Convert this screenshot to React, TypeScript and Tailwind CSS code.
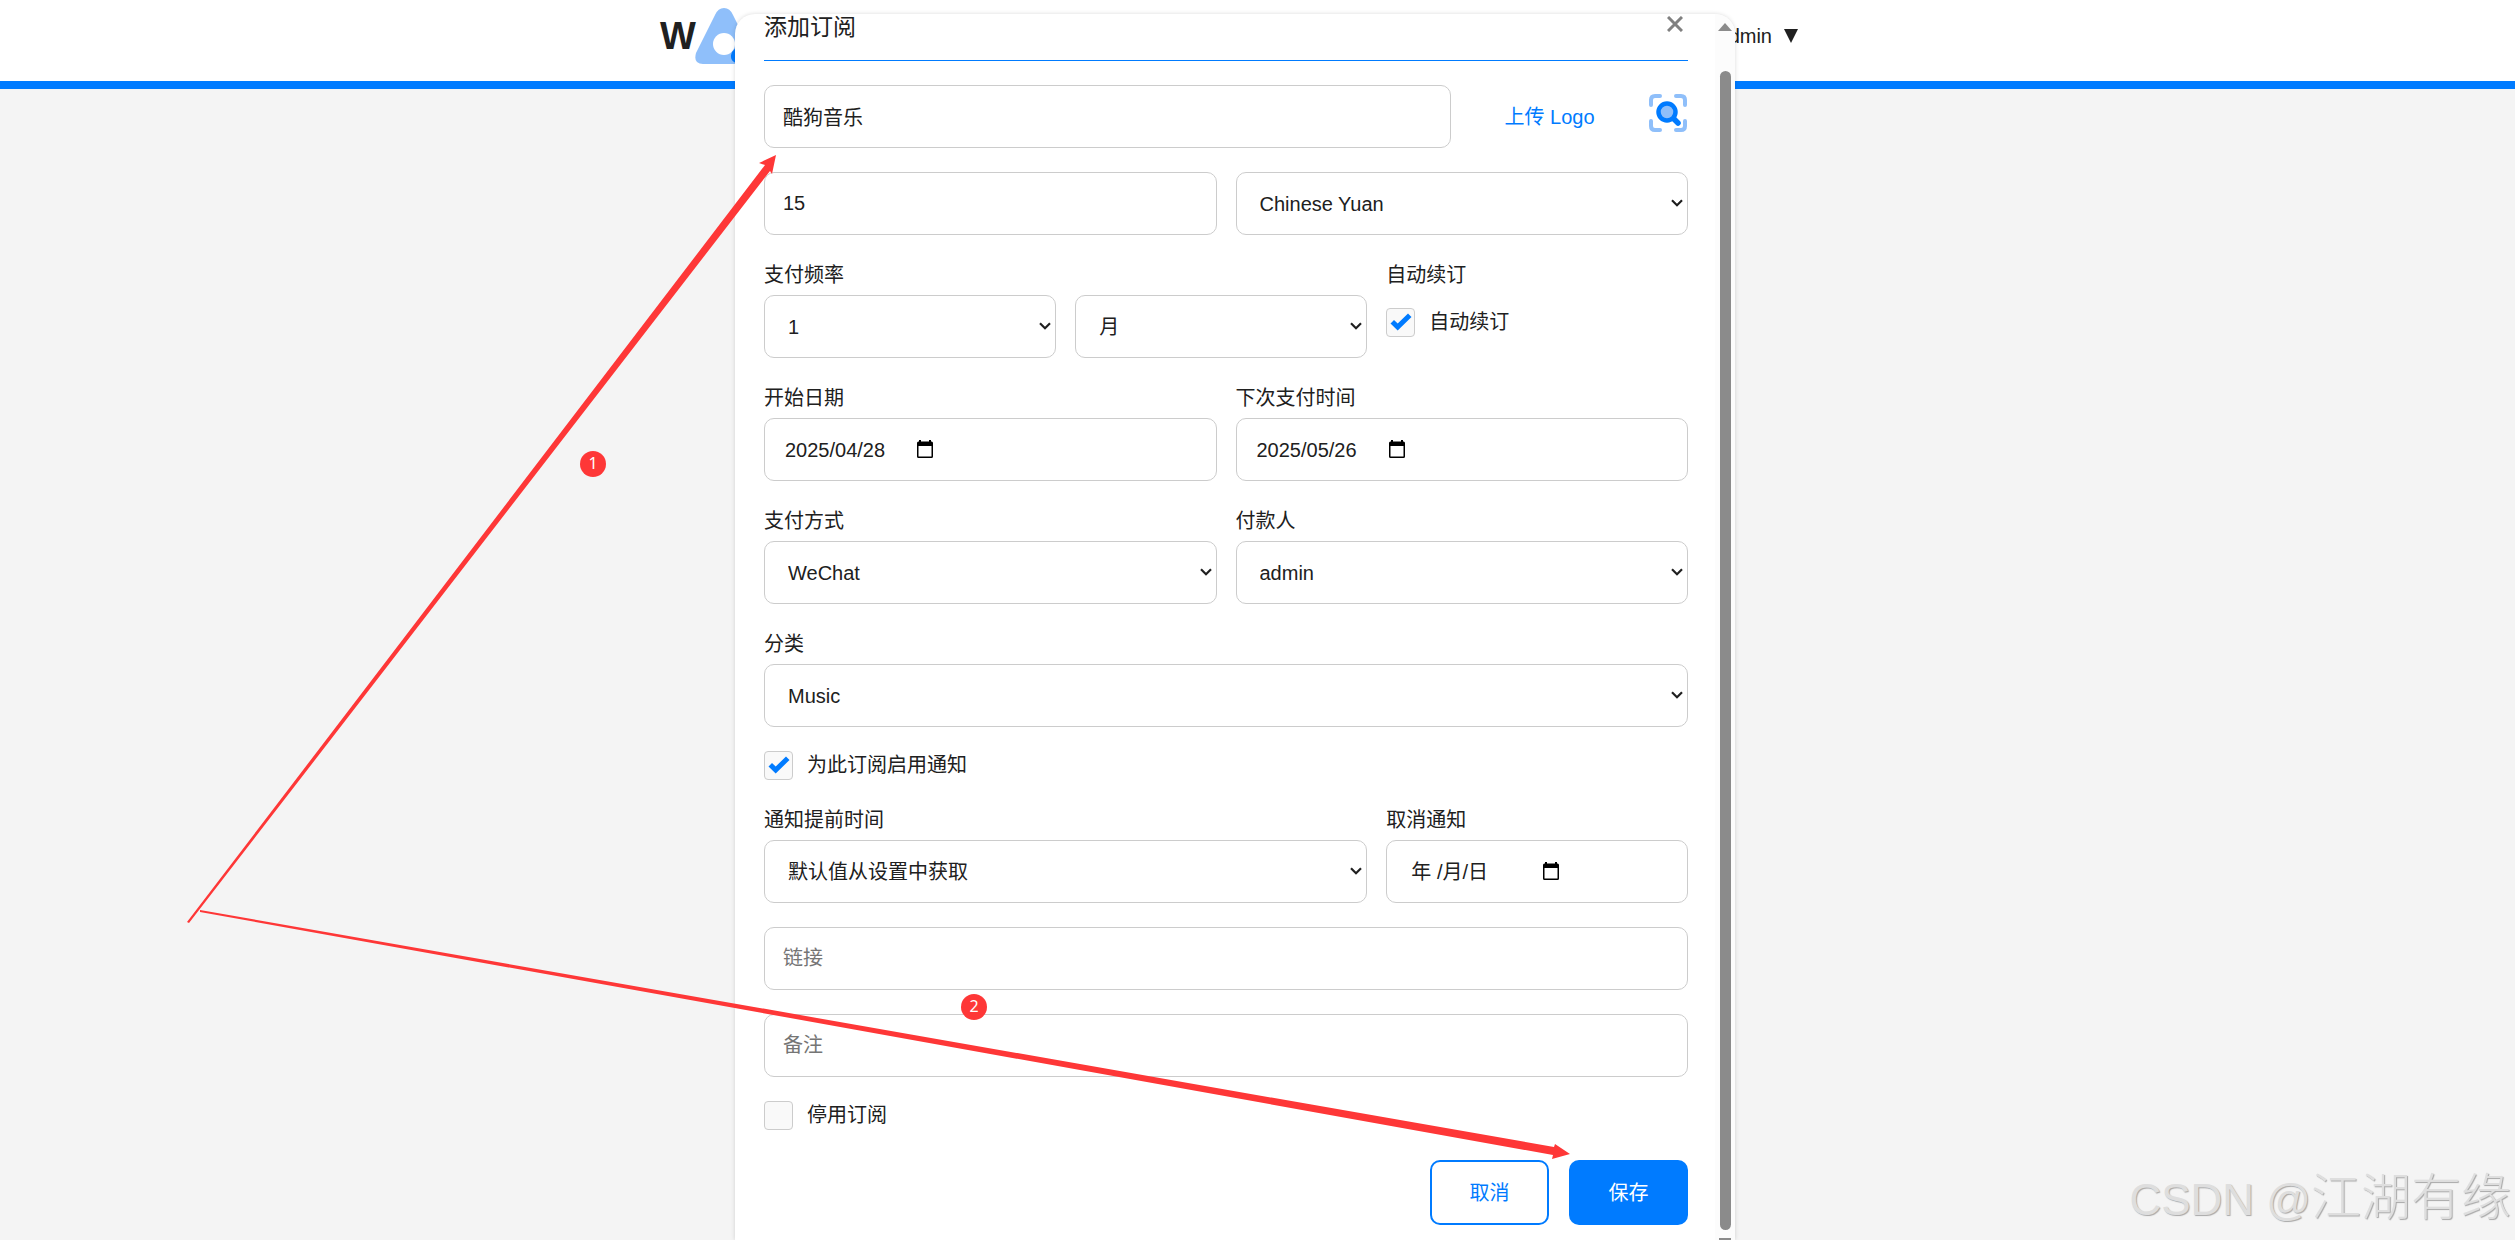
import React, { useState } from "react";

const FIELD =
  "h-[63px] w-full rounded-[10px] border border-[#cccccc] bg-white text-[20px] text-[#202020] outline-none";

const Chevron: React.FC = () => (
  <svg
    className="pointer-events-none absolute top-[27px] right-[5px] h-2 w-3"
    viewBox="0 0 12 8"
    fill="none"
    stroke="#202020"
    strokeWidth="2.2"
  >
    <path d="M1 1.2 L6 6.2 L11 1.2" />
  </svg>
);

interface FieldProps {
  id: string;
  label: string;
  children: React.ReactNode;
}

const Field: React.FC<FieldProps> = ({ id, label, children }) => (
  <div className="min-w-0">
    <label htmlFor={id} className="mb-[3px] block text-[20px] leading-[33px]">
      {label}
    </label>
    {children}
  </div>
);

interface SelectProps {
  id: string;
  options: string[];
  ariaLabel?: string;
}

const Select: React.FC<SelectProps> = ({ id, options, ariaLabel }) => (
  <div className="relative min-w-0 flex-1">
    <select id={id} aria-label={ariaLabel} className={FIELD + " appearance-none pr-6 pl-[23px]"}>
      {options.map((option) => (
        <option key={option}>{option}</option>
      ))}
    </select>
    <Chevron />
  </div>
);

interface DateFieldProps {
  id: string;
  value?: string;
  placeholder?: string;
  className: string;
}

const DateField: React.FC<DateFieldProps> = ({ id, value, placeholder, className }) => (
  <div className={FIELD + " flex items-center " + className}>
    <input
      id={id}
      type="text"
      defaultValue={value}
      placeholder={placeholder}
      className="w-[132px] bg-transparent outline-none placeholder:text-[#202020]"
    />
    <button type="button" aria-label="选择日期" className="shrink-0 pb-[2px]">
      <svg width="16" height="18" viewBox="0 0 16 18">
        <path
          fillRule="evenodd"
          d="M2 0h2v1.5h8V0h2v1.5h.5A1.5 1.5 0 0 1 16 3v13.5a1.5 1.5 0 0 1-1.5 1.5h-13A1.5 1.5 0 0 1 0 16.5V3a1.5 1.5 0 0 1 1.5-1.5H2zM1.5 6v10.5h13V6z"
        />
      </svg>
    </button>
  </div>
);

interface CheckProps {
  id: string;
  label: string;
  defaultChecked?: boolean;
}

const Check: React.FC<CheckProps> = ({ id, label, defaultChecked = false }) => {
  const [checked, setChecked] = useState(defaultChecked);

  return (
    <div className="flex h-[29px] items-center gap-[14px]">
      <div className="relative h-[29px] w-[29px]">
        <input
          id={id}
          type="checkbox"
          checked={checked}
          onChange={() => setChecked((prev) => !prev)}
          className="block h-[29px] w-[29px] appearance-none rounded-[4px] border border-[#cccccc] bg-[#f9f9f9]"
        />
        {checked && (
          <svg className="pointer-events-none absolute inset-0" width="29" height="29" viewBox="0 0 29 29">
            <path d="M4.500 15.500 L8 12 L11.700 15.500 L22 5.500 L25.500 9 L11.700 22.500 Z" fill="#007bff" />
          </svg>
        )}
      </div>
      <label htmlFor={id} className="text-[20px] leading-[29px]">
        {label}
      </label>
    </div>
  );
};

const Header: React.FC = () => (
  <header className="border-b-8 border-[#007bff] bg-white pr-[45px]">
    <div className="mx-auto flex h-[81px] w-full max-w-[1150px] items-start justify-between pt-2">
      <div className="flex">
        <span className="w-[35px] text-[38px] leading-[56px] font-bold">W</span>
        <svg width="90" height="57" viewBox="0 0 90 57">
          <path
            d="M20 7 Q23 0 29 0 Q35 0 38 7 L57 45 Q61 56 51 56 L8 56 Q-2 56 1 45 Z"
            fill="#8fbffa"
          />
          <circle cx="29" cy="36" r="11" fill="#ffffff" />
          <path d="M58 20 Q62 14 66 20 L82 46 Q86 56 77 56 L44 56 Q33 54 37 44 Z" fill="#007bff" />
        </svg>
      </div>
      <button type="button" className="flex items-center gap-3 pr-3 text-[20px] leading-[56px]">
        admin
        <svg width="14" height="14" viewBox="0 0 14 14">
          <path d="M0 0 H14 L7 14 Z" fill="#202020" />
        </svg>
      </button>
    </div>
  </header>
);

const ScrollBar: React.FC = () => (
  <div className="flex w-5 shrink-0 flex-col items-center bg-[#fcfcfc] pt-[9px]">
    <svg width="14" height="8" viewBox="0 0 14 8" className="shrink-0">
      <path d="M7 0 L14 8 H0 Z" fill="#8b8b8b" />
    </svg>
    <div className="mt-10 w-[11px] flex-1 rounded-full bg-[#8b8b8b]" />
    <div className="mt-2 h-[2px] w-3 bg-[#8b8b8b]" />
  </div>
);

const SubscriptionForm: React.FC = () => (
  <form className="min-w-0 flex-1 pr-[27px] pl-[29px]">
    <div className="flex h-[47px] items-start justify-between border-b border-[#007bff]">
      <h3 className="text-[23px] leading-[26px]">添加订阅</h3>
      <button type="button" aria-label="关闭" className="pt-[2px] pr-[5px]">
        <svg width="16" height="16" viewBox="0 0 16 16" stroke="#808080" strokeWidth="3">
          <path d="M1 1 L15 15 M15 1 L1 15" />
        </svg>
      </button>
    </div>

    <div className="mt-6 flex flex-col gap-6">
      {/* Name and logo */}
      <div className="flex gap-5">
        <input
          type="text"
          aria-label="订阅名称"
          defaultValue="酷狗音乐"
          className={FIELD + " min-w-0 flex-1 px-[18px]"}
        />
        <button type="button" className="w-[157px] text-[20px] text-[#007bff]">
          上传 Logo
        </button>
        <button type="button" aria-label="搜索 Logo" className="pb-2">
          <svg width="40" height="40" viewBox="0 0 40 40" fill="none" strokeLinecap="round">
            <path
              d="M3 12 V7 Q3 3 7 3 H12 M28 3 H33 Q37 3 37 7 V12 M37 28 V33 Q37 37 33 37 H28 M12 37 H7 Q3 37 3 33 V28"
              stroke="#8fbffa"
              strokeWidth="4"
            />
            <path d="M25 25 L30 30" stroke="#007bff" strokeWidth="5.500" />
            <circle cx="19" cy="19" r="8.500" fill="#8fbffa" stroke="#007bff" strokeWidth="4.500" />
          </svg>
        </button>
      </div>

      {/* Price */}
      <div className="grid grid-cols-2 gap-[19px]">
        <input type="text" aria-label="价格" defaultValue="15" className={FIELD + " px-[18px]"} />
        <Select id="currency" ariaLabel="货币" options={["Chinese Yuan", "US Dollar", "Euro"]} />
      </div>

      <div className="grid grid-cols-[2fr_1fr] gap-[19px]">
        <Field id="frequency" label="支付频率">
          <div className="flex gap-[19px]">
            <Select id="frequency" options={["1", "2", "3"]} />
            <Select id="cycle" ariaLabel="周期" options={["月", "日", "周", "年"]} />
          </div>
        </Field>
        <div>
          <p className="mb-4 text-[20px] leading-[33px]">自动续订</p>
          <Check id="auto-renew" label="自动续订" defaultChecked />
        </div>
      </div>

      <div className="grid grid-cols-2 gap-[19px]">
        <Field id="start-date" label="开始日期">
          <DateField id="start-date" value="2025/04/28" className="pl-5" />
        </Field>
        <Field id="next-payment" label="下次支付时间">
          <DateField id="next-payment" value="2025/05/26" className="pl-5" />
        </Field>
      </div>

      <div className="grid grid-cols-2 gap-[19px]">
        <Field id="method" label="支付方式">
          <Select id="method" options={["WeChat", "Alipay", "PayPal"]} />
        </Field>
        <Field id="payer" label="付款人">
          <Select id="payer" options={["admin"]} />
        </Field>
      </div>

      <Field id="category" label="分类">
        <Select id="category" options={["Music", "Entertainment", "Utilities"]} />
      </Field>

      {/* Notifications */}
      <Check id="notify" label="为此订阅启用通知" defaultChecked />

      <div className="grid grid-cols-[2fr_1fr] gap-[19px]">
        <Field id="notify-days" label="通知提前时间">
          <Select id="notify-days" options={["默认值从设置中获取", "1", "2"]} />
        </Field>
        <Field id="cancel-date" label="取消通知">
          <DateField id="cancel-date" placeholder="年 /月/日" className="pl-6" />
        </Field>
      </div>

      <input
        type="text"
        aria-label="链接"
        placeholder="链接"
        className={FIELD + " px-[18px] placeholder:text-[#757575]"}
      />
      <input
        type="text"
        aria-label="备注"
        placeholder="备注"
        className={FIELD + " px-[18px] placeholder:text-[#757575]"}
      />
      <Check id="inactive" label="停用订阅" />
    </div>

    <div className="mt-[30px] flex justify-end gap-5 text-[20px]">
      <button
        type="button"
        className="h-[65px] w-[119px] rounded-[10px] border-2 border-[#007bff] bg-white text-[#007bff]"
      >
        取消
      </button>
      <button type="button" className="h-[65px] w-[119px] rounded-[10px] bg-[#007bff] text-white">
        保存
      </button>
    </div>
  </form>
);

const Annotations: React.FC = () => (
  <div className="pointer-events-none absolute inset-0 overflow-hidden">
    <svg className="absolute top-0 left-0" width="1600" height="1200" fill="#fe3737">
      <polygon points="187,922 765,165 759,163 776,155 772,174 770,171 189,923" />
      <polygon points="200,910 1554,1147 1555,1144 1570,1154 1552,1159 1553,1155 200,912" />
    </svg>
    <span className="absolute top-[451px] left-[580px] h-[26px] w-[26px] rounded-full bg-[#fe3737] text-center font-['Noto_Sans',sans-serif] text-base leading-[25px] text-white">
      1
    </span>
    <span className="absolute top-[994px] left-[961px] h-[26px] w-[26px] rounded-full bg-[#fe3737] text-center font-['Noto_Sans',sans-serif] text-base leading-[25px] text-white">
      2
    </span>
    <p className="absolute right-1 bottom-2 text-[44px] leading-[64px] text-[#dedede] [text-shadow:1px_1px_1px_#a8a8a8]">
      CSDN @<span className="font-light text-[50px]">江湖有缘</span>
    </p>
  </div>
);

const App: React.FC = () => {
  return (
    <div className="relative h-screen overflow-hidden bg-[#f4f4f4] font-['Liberation_Sans','Noto_Sans_CJK_SC',sans-serif] text-[#202020]">
      <Header />
      <div className="absolute inset-0 flex justify-center pt-[14px] pr-[45px]">
        <div
          role="dialog"
          aria-label="添加订阅"
          className="flex w-full max-w-[1000px] overflow-hidden rounded-t-[20px] bg-white shadow-[0_0_4px_rgba(0,0,0,0.15)]"
        >
          <SubscriptionForm />
          <ScrollBar />
        </div>
      </div>
      <Annotations />
    </div>
  );
};

export default App;
